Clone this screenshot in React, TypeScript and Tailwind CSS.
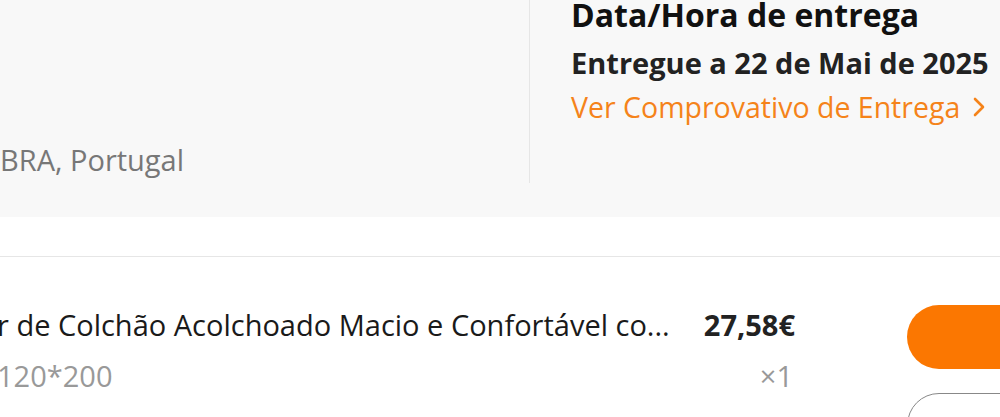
import React from "react";

export default function App() {
  const font = { fontFamily: '"Open Sans", "Noto Sans", "Liberation Sans", sans-serif' };
  return (
    <div className="w-[1000px] h-[417px] overflow-hidden bg-white text-[#222]" style={font}>
      <section className="h-[217px] bg-[#f8f8f8] flex">
        <div className="w-[529px] shrink-0 pt-[140px]">
          <p className="text-[29px] leading-[40px] text-[#777] whitespace-nowrap">BRA, Portugal</p>
        </div>
        <div className="h-[183px] border-l border-[#e6e6e6] pl-[41px]">
          <p className="text-[32px] font-bold leading-[48px] -mt-[9px] text-[#111] whitespace-nowrap">Data/Hora de entrega</p>
          <p className="text-[29px] font-bold leading-[48px] text-[#222] whitespace-nowrap">Entregue a 22 de Mai de 2025</p>
          <p className="text-[28.5px] leading-[40px] text-[#f5831a] whitespace-nowrap flex items-center">
            Ver Comprovativo de Entrega
            <svg width="18" height="24" viewBox="0 0 18 24" className="ml-[10px]" fill="none">
              <path d="M5 4 L13 12 L5 20" stroke="#f5831a" strokeWidth="2.6" strokeLinecap="round" strokeLinejoin="round" />
            </svg>
          </p>
        </div>
      </section>
      <div className="h-[39px]" />
      <div className="h-px bg-[#e6e6e6]" />
      <div className="flex pt-[48px] -ml-[3px]">
        <div className="w-[690px] shrink-0">
          <p className="text-[29px] leading-[40px] text-[#1a1a1a] whitespace-nowrap">r de Colchão Acolchoado Macio e Confortável co...</p>
          <p className="text-[29px] leading-[40px] mt-[11px] text-[#999] whitespace-nowrap">120*200</p>
        </div>
        <div className="w-[108px] shrink-0 text-right">
          <p className="text-[29px] leading-[40px] font-bold whitespace-nowrap">27,58€</p>
          <p className="text-[29px] leading-[40px] mt-[11px] text-[#999] pr-[2px]">×1</p>
        </div>
        <div className="ml-[112px] flex flex-col gap-[24px] shrink-0">
          <button className="w-[260px] h-[64px] rounded-full bg-[#fb7701]" aria-label="Comprar novamente" />
          <button className="w-[260px] h-[64px] rounded-full border-[1.5px] border-[#888] bg-white" aria-label="Avaliar" />
        </div>
      </div>
    </div>
  );
}
